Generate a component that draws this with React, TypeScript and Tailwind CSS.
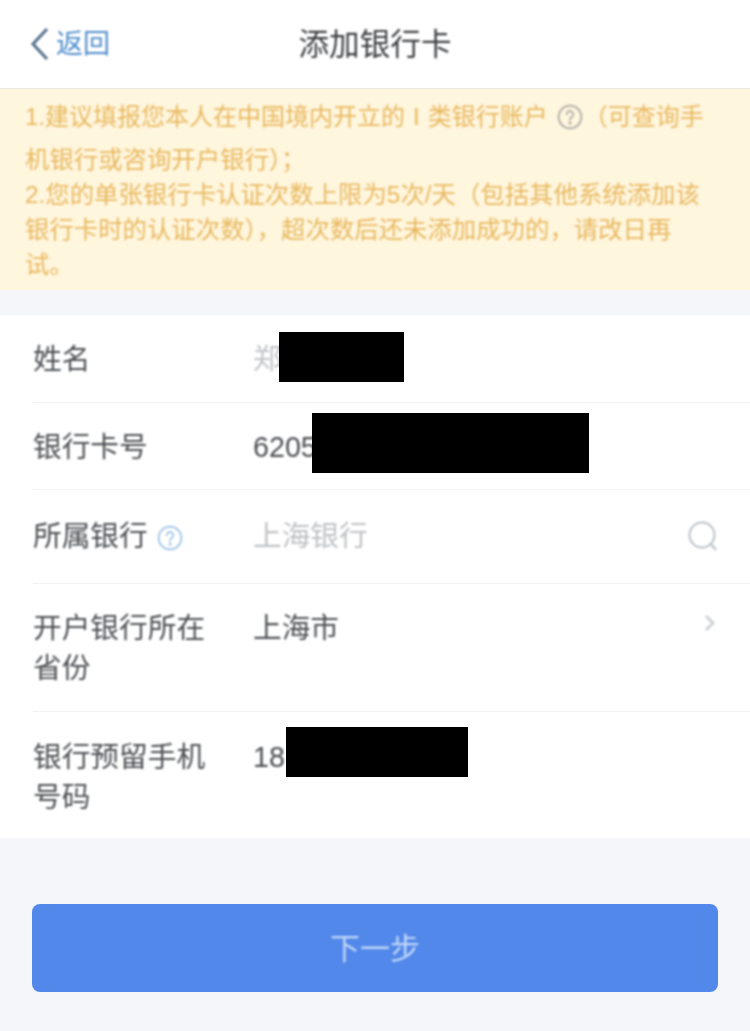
const fontStack = '"Liberation Sans", "Noto Sans CJK SC", sans-serif';

function HelpIcon({ size, color }: { size: number; color: string }) {
  return (
    <svg width={size} height={size} viewBox="0 0 24 24" fill="none" stroke={color} strokeWidth="1.6" className="inline-block shrink-0">
      <circle cx="12" cy="12" r="10.5" />
      <path d="M9 9.5a3 3 0 1 1 4.6 2.5c-1 .7-1.6 1.2-1.6 2.5" strokeLinecap="round" />
      <circle cx="12" cy="17.6" r="0.6" fill={color} />
    </svg>
  );
}

function Row({
  label,
  height,
  pad = "pt-[24px]",
  children,
  right,
  last,
}: {
  label: React.ReactNode;
  height: string;
  pad?: string;
  children?: React.ReactNode;
  right?: React.ReactNode;
  last?: boolean;
}) {
  return (
    <div className={`ml-[33px] flex ${height} ${last ? "" : "border-b border-[#f1f2f4]"}`}>
      <div className={`w-[220px] shrink-0 ${pad} text-[28.7px] leading-[40px] text-[#4c4f53] blur-[1px]`}>{label}</div>
      <div className={`relative flex-1 ${pad} text-[28.7px] leading-[40px]`}>{children}</div>
      {right}
    </div>
  );
}

export default function App() {
  return (
    <div className="flex h-[1031px] w-[750px] flex-col overflow-hidden bg-[#f5f6fa]" style={{ fontFamily: fontStack }}>
      <header className="relative flex h-[89px] shrink-0 items-center justify-center border-b border-[#ebe8e2] bg-white">
        <div className="absolute left-[30px] top-[27px] flex items-center text-[#4f8ccb] blur-[1px]">
          <svg width="20" height="34" viewBox="0 0 20 34" fill="none" stroke="#566f8a" strokeWidth="3">
            <path d="M17 2 3 17l14 15" />
          </svg>
          <span className="ml-[6px] text-[27px] leading-[34px]">返回</span>
        </div>
        <h1 className="text-[30.6px] font-normal leading-[40px] text-[#3c3e40] blur-[1px]">添加银行卡</h1>
      </header>

      <div className="h-[201px] shrink-0 whitespace-nowrap bg-[#fff6de] pl-[25px] pt-[8px] text-[24.4px] leading-[35px] text-[#e8b85f]">
        <div className="blur-[1px]">
          <p className="mb-[6px] flex h-[39px] items-center text-[24px]">
            1.建议填报您本人在中国境内开立的<span className="mx-[8px]">I</span>类银行账户
            <span className="ml-[9px] mr-[1px] flex">
              <HelpIcon size={26} color="#a9a9a6" />
            </span>
            （可查询手
          </p>
          <p>机银行或咨询开户银行）；</p>
          <p>2.您的单张银行卡认证次数上限为5次/天（包括其他系统添加该</p>
          <p>银行卡时的认证次数），超次数后还未添加成功的，请改日再</p>
          <p>试。</p>
        </div>
      </div>

      <section className="mt-[25px] shrink-0 bg-white">
        <Row label="姓名" height="h-[88px]">
          <span className="text-[#c2c3c7] blur-[1px]">郑</span>
          <div className="absolute left-[26px] top-[17px] h-[50px] w-[125px] bg-black" />
        </Row>
        <Row label="银行卡号" height="h-[87px]">
          <span className="font-medium text-[#4c4f53] blur-[1px]">6205</span>
          <div className="absolute left-[59px] top-[10px] h-[60px] w-[277px] bg-black" />
        </Row>
        <Row
          label={
            <span className="flex items-center">
              所属银行
              <span className="ml-[9px] mt-[4px] flex">
                <HelpIcon size={26} color="#9cc3e6" />
              </span>
            </span>
          }
          height="h-[94px]"
          pad="pt-[26px]"
          right={
            <svg width="32" height="32" viewBox="0 0 32 32" fill="none" stroke="#b9c0c6" strokeWidth="2" className="absolute right-[31px] mt-[30px] blur-[1px]">
              <circle cx="15" cy="15" r="12.5" />
              <path d="m24 24 5 6" />
            </svg>
          }
        >
          <span className="inline-block text-[#bfc1c4] blur-[1px]">上海银行</span>
        </Row>
        <Row
          label={
            <>
              开户银行所在
              <br />
              省份
            </>
          }
          height="h-[128px]"
          right={
            <svg width="12" height="20" viewBox="0 0 12 20" fill="none" stroke="#cfd2d5" strokeWidth="3" className="absolute right-[34px] mt-[29px] blur-[1px]">
              <path d="m2 3 7 7-7 7" />
            </svg>
          }
        >
          <span className="inline-block text-[#4c4f53] blur-[1px]">上海市</span>
        </Row>
        <Row
          label={
            <>
              银行预留手机
              <br />
              号码
            </>
          }
          height="h-[126px]"
          pad="pt-[25px]"
          last
        >
          <span className="inline-block font-medium text-[#4c4f53] blur-[1px]">18</span>
          <div className="absolute left-[33px] top-[15px] h-[50px] w-[182px] bg-black" />
        </Row>
      </section>

      <div className="px-[32px] pt-[66px]">
        <button className="flex h-[88px] w-full items-center justify-center rounded-[8px] bg-[#5288ea] text-[#c3d8f8]">
          <span className="text-[30px] blur-[1px]">下一步</span>
        </button>
      </div>
    </div>
  );
}
